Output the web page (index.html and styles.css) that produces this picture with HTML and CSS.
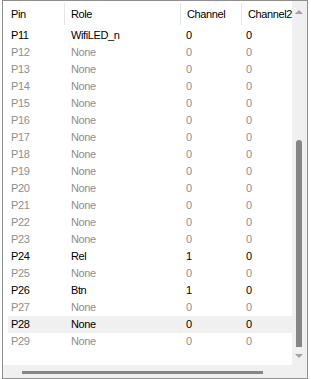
FILE: index.html
```html
<!DOCTYPE html>
<html lang="en">
<head>
  <meta charset="UTF-8" />
  <title>Pins</title>
  <link rel="stylesheet" href="styles.css">
</head>
<body>
  <div class="list">
    <div class="main">
      <div class="content">
        <div class="header">
          <div class="col c1">Pin</div>
          <div class="col c2">Role</div>
          <div class="col c3">Channel</div>
          <div class="col c4">Channel2</div>
        </div>
        <div class="row"><div class="col c1">P11</div><div class="col c2">WifiLED_n</div><div class="col c3">0</div><div class="col c4">0</div></div>
        <div class="row off"><div class="col c1">P12</div><div class="col c2">None</div><div class="col c3">0</div><div class="col c4">0</div></div>
        <div class="row off"><div class="col c1">P13</div><div class="col c2">None</div><div class="col c3">0</div><div class="col c4">0</div></div>
        <div class="row off"><div class="col c1">P14</div><div class="col c2">None</div><div class="col c3">0</div><div class="col c4">0</div></div>
        <div class="row off"><div class="col c1">P15</div><div class="col c2">None</div><div class="col c3">0</div><div class="col c4">0</div></div>
        <div class="row off"><div class="col c1">P16</div><div class="col c2">None</div><div class="col c3">0</div><div class="col c4">0</div></div>
        <div class="row off"><div class="col c1">P17</div><div class="col c2">None</div><div class="col c3">0</div><div class="col c4">0</div></div>
        <div class="row off"><div class="col c1">P18</div><div class="col c2">None</div><div class="col c3">0</div><div class="col c4">0</div></div>
        <div class="row off"><div class="col c1">P19</div><div class="col c2">None</div><div class="col c3">0</div><div class="col c4">0</div></div>
        <div class="row off"><div class="col c1">P20</div><div class="col c2">None</div><div class="col c3">0</div><div class="col c4">0</div></div>
        <div class="row off"><div class="col c1">P21</div><div class="col c2">None</div><div class="col c3">0</div><div class="col c4">0</div></div>
        <div class="row off"><div class="col c1">P22</div><div class="col c2">None</div><div class="col c3">0</div><div class="col c4">0</div></div>
        <div class="row off"><div class="col c1">P23</div><div class="col c2">None</div><div class="col c3">0</div><div class="col c4">0</div></div>
        <div class="row"><div class="col c1">P24</div><div class="col c2">Rel</div><div class="col c3">1</div><div class="col c4">0</div></div>
        <div class="row off"><div class="col c1">P25</div><div class="col c2">None</div><div class="col c3">0</div><div class="col c4">0</div></div>
        <div class="row"><div class="col c1">P26</div><div class="col c2">Btn</div><div class="col c3">1</div><div class="col c4">0</div></div>
        <div class="row off"><div class="col c1">P27</div><div class="col c2">None</div><div class="col c3">0</div><div class="col c4">0</div></div>
        <div class="row hover"><div class="col c1">P28</div><div class="col c2">None</div><div class="col c3">0</div><div class="col c4">0</div></div>
        <div class="row off"><div class="col c1">P29</div><div class="col c2">None</div><div class="col c3">0</div><div class="col c4">0</div></div>
      </div>
      <div class="vscroll">
        <div class="arrow-up"></div>
        <div class="vthumb"></div>
        <div class="arrow-down"></div>
      </div>
    </div>
    <div class="bottom">
      <div class="hscroll"><div class="hthumb"></div></div>
      <div class="corner"></div>
    </div>
  </div>
</body>
</html>
```

FILE: styles.css
```css
body {
  margin: 0;
  background: #fff;
  font-family: "Liberation Sans", Arial, sans-serif;
  font-size: 11px;
  letter-spacing: -0.4px;
  color: #000;
}

.list {
  margin-left: 2px;
  width: 304px;
  height: 377px;
  border: 1px solid #8f8f8f;
  display: flex;
  flex-direction: column;
}

.main {
  display: flex;
  height: 364px;
}

.content {
  flex: 1;
  background: #fff;
}

.header {
  display: flex;
  height: 26px;
  align-items: center;
}

.header .col {
  border-right: 1px solid #e5e5e5;
  height: 22px;
  line-height: 22px;
}

.row {
  display: flex;
  height: 17px;
  line-height: 17px;
  margin-left: 5px;
}

.row .c1 {
  width: 54px;
  padding-left: 3px;
}

.header .c1 {
  width: 53px;
  padding-left: 8px;
}

.col {
  padding-left: 6px;
  white-space: nowrap;
  overflow: hidden;
}

.c2 {
  width: 109px;
}

.c3 {
  width: 54px;
}

.header .c4 {
  border-right: none;
}

.c4 {
  flex: 1;
}

.off {
  color: #8e8e8e;
}

.hover {
  background: #f0f0f0;
}

.vscroll {
  width: 17px;
  background: #f0f0f0;
  display: flex;
  flex-direction: column;
  align-items: center;
}

.arrow-up {
  margin-top: 9px;
  width: 0;
  height: 0;
  border-left: 4px solid transparent;
  border-right: 4px solid transparent;
  border-bottom: 4px solid #a3a3a3;
}

.vthumb {
  margin-top: 126px;
  width: 6px;
  height: 207px;
  background: #858585;
  border-radius: 3px 3px 0 0;
}

.arrow-down {
  margin-top: 7px;
  width: 0;
  height: 0;
  border-left: 4px solid transparent;
  border-right: 4px solid transparent;
  border-top: 4px solid #a3a3a3;
}

.bottom {
  display: flex;
  flex: 1;
  background: #f0f0f0;
}

.hscroll {
  flex: 1;
  padding-left: 19px;
  padding-top: 6px;
}

.hthumb {
  width: 241px;
  height: 3px;
  background: #858585;
}

.corner {
  width: 17px;
}
```
